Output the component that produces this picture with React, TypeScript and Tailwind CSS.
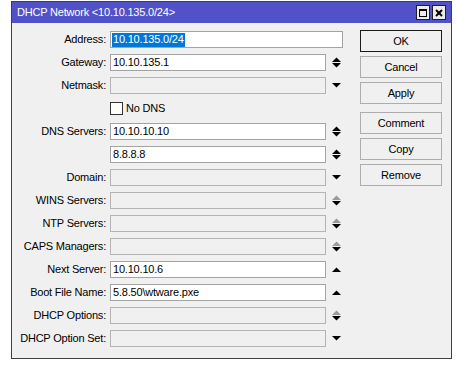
import React from "react";

type Arrow = "none" | "ud" | "d" | "u" | "gud";

const rows: { label: string; value?: string; enabled: boolean; arrow: Arrow; wide?: boolean; selected?: boolean; checkbox?: boolean }[] = [
  { label: "Address:", value: "10.10.135.0/24", enabled: true, arrow: "none", wide: true, selected: true },
  { label: "Gateway:", value: "10.10.135.1", enabled: true, arrow: "ud" },
  { label: "Netmask:", enabled: false, arrow: "d" },
  { label: "", enabled: true, arrow: "none", checkbox: true },
  { label: "DNS Servers:", value: "10.10.10.10", enabled: true, arrow: "ud" },
  { label: "", value: "8.8.8.8", enabled: true, arrow: "ud" },
  { label: "Domain:", enabled: false, arrow: "d" },
  { label: "WINS Servers:", enabled: false, arrow: "gud" },
  { label: "NTP Servers:", enabled: false, arrow: "gud" },
  { label: "CAPS Managers:", enabled: false, arrow: "gud" },
  { label: "Next Server:", value: "10.10.10.6", enabled: true, arrow: "u" },
  { label: "Boot File Name:", value: "5.8.50\\wtware.pxe", enabled: true, arrow: "u" },
  { label: "DHCP Options:", enabled: false, arrow: "gud" },
  { label: "DHCP Option Set:", enabled: false, arrow: "d" },
];

function ArrowIcon({ kind }: { kind: Arrow }) {
  if (kind === "none") return null;
  if (kind === "d")
    return (
      <svg width="9" height="11" viewBox="0 0 9 11" className="block">
        <polygon points="0,3 9,3 4.5,7.5" fill="#000" />
      </svg>
    );
  if (kind === "u")
    return (
      <svg width="9" height="11" viewBox="0 0 9 11" className="block">
        <polygon points="0,8 9,8 4.5,3.5" fill="#000" />
      </svg>
    );
  const upColor = kind === "gud" ? "#9a9a9a" : "#000";
  return (
    <svg width="9" height="11" viewBox="0 0 9 11" className="block">
      <polygon points="0,5 9,5 4.5,0.5" fill={upColor} />
      <polygon points="0,6 9,6 4.5,10.5" fill="#000" />
    </svg>
  );
}

const font = { fontFamily: "'Liberation Sans', Arial, sans-serif" };

export default function App() {
  return (
    <div className="w-[457px] h-[389px] bg-white pt-[1px] text-[11px] tracking-[-0.2px] text-black" style={font}>
      <div className="ml-[11px] w-[441px] h-[358px] border border-[#404040] bg-[#f0f0f0] flex flex-col">
        <div className="h-[21px] bg-[#5252c8] flex items-center pl-[5px] pr-[5px] text-white">
          <span className="flex-1 leading-none">DHCP Network &lt;10.10.135.0/24&gt;</span>
          <div className="flex gap-[2px]">
            <div className="w-[14px] h-[15px] bg-[#ececec] border border-[#202020] flex items-center justify-center">
              <div className="w-[8px] h-[8px] border border-black border-t-2" />
            </div>
            <div className="w-[14px] h-[15px] bg-[#ececec] border border-[#202020] flex items-center justify-center">
              <svg width="8" height="8" viewBox="0 0 8 8">
                <path d="M1 1 L7 7 M7 1 L1 7" stroke="#000" strokeWidth="2" />
              </svg>
            </div>
          </div>
        </div>
        <div className="flex items-start">
          <div className="flex flex-col gap-[6px] pt-[8px]">
            {rows.map((r, i) => (
              <div key={i} className="flex items-center h-[17px]">
                <div className="w-[94px] text-right leading-none whitespace-nowrap">{r.label}</div>
                {r.checkbox ? (
                  <div className="ml-[4px] flex items-center gap-[3px]">
                    <div className="w-[13px] h-[13px] bg-white border border-[#333]" />
                    <span className="leading-none">No DNS</span>
                  </div>
                ) : (
                  <>
                    <div
                      className={`ml-[4px] h-[17px] border flex items-center pl-[1px] leading-none whitespace-nowrap ${
                        r.wide ? "w-[233px]" : "w-[216px]"
                      } ${r.enabled ? "bg-white border-[#a3a3a3]" : "bg-[#f0f0f0] border-[#b4b4b4]"}`}
                    >
                      {r.value && (
                        <span className={r.selected ? "bg-[#0078d7] text-white px-[1px] h-[14px] flex items-center" : "px-[1px]"}>
                          {r.value}
                        </span>
                      )}
                    </div>
                    {!r.wide && (
                      <div className="ml-[6px] w-[9px] flex items-center">
                        <ArrowIcon kind={r.arrow} />
                      </div>
                    )}
                  </>
                )}
              </div>
            ))}
          </div>
          <div className="ml-auto mr-[9px] pt-[7px] flex flex-col w-[82px]">
            <button className="h-[22px] bg-[#f0f0f0] border border-[#1a1a1a]">OK</button>
            <button className="mt-[4px] h-[22px] bg-[#f0f0f0] border border-[#adadad]">Cancel</button>
            <button className="mt-[4px] h-[22px] bg-[#f0f0f0] border border-[#adadad]">Apply</button>
            <button className="mt-[8px] h-[22px] bg-[#f0f0f0] border border-[#adadad]">Comment</button>
            <button className="mt-[4px] h-[22px] bg-[#f0f0f0] border border-[#adadad]">Copy</button>
            <button className="mt-[4px] h-[22px] bg-[#f0f0f0] border border-[#adadad]">Remove</button>
          </div>
        </div>
      </div>
    </div>
  );
}
